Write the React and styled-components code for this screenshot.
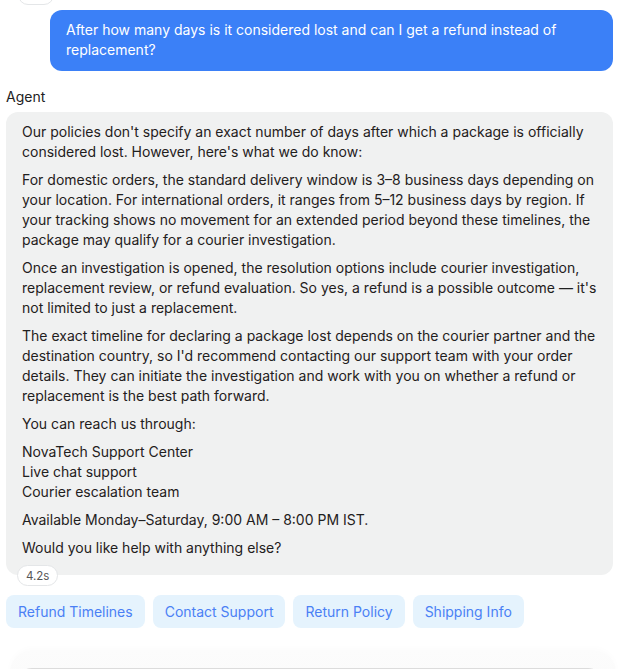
import React from 'react';
import styled, { createGlobalStyle } from 'styled-components';

const GlobalStyle = createGlobalStyle`
  html, body {
    margin: 0;
    padding: 0;
    background: #ffffff;
    overflow: hidden;
  }
  body {
    font-family: Inter, "Liberation Sans", Arial, sans-serif;
    color: #1f2020;
  }
`;

const Thread = styled.div`
  display: flex;
  flex-direction: column;
  padding: 0 15px 0 6px;
  height: 669px;
  box-sizing: border-box;
  overflow: hidden;
`;

const Stub = styled.div`
  align-self: flex-start;
  margin: -16px 0 0 12px;
  width: 36px;
  height: 21px;
  flex-shrink: 0;
  box-sizing: border-box;
  border: 1px solid #e4e6e8;
  border-radius: 10px;
  background: #fff;
`;

const UserRow = styled.div`
  display: flex;
  justify-content: flex-end;
  margin-top: 5px;
`;

const UserBubble = styled.div`
  max-width: 563px;
  box-sizing: border-box;
  background: #3b80f7;
  color: #ffffff;
  font-size: 14px;
  line-height: 20px;
  padding: 10px 16px 11px;
  border-radius: 12px;
`;

const Sender = styled.div`
  margin-top: 18px;
  font-size: 14px;
  line-height: 16px;
  color: #222;
`;

const AgentWrap = styled.div`
  position: relative;
  margin-top: 7px;
`;

const AgentBubble = styled.div`
  background: #f0f1f1;
  border-radius: 12px;
  padding: 10px 16px 17px;
  font-size: 14px;
  line-height: 20px;
  color: #1f2020;

  p {
    margin: 0 0 8px;
  }
  p:last-child {
    margin-bottom: 0;
  }
`;

const Timing = styled.span`
  position: absolute;
  left: 11px;
  bottom: -11px;
  height: 21px;
  padding: 0 8px;
  box-sizing: border-box;
  display: inline-flex;
  align-items: center;
  background: #ffffff;
  border: 1px solid #e4e6e8;
  border-radius: 11px;
  font-size: 11.5px;
  color: #555;
`;

const Chips = styled.div`
  display: flex;
  gap: 8px;
  margin-top: 20px;
`;

const Chip = styled.button`
  height: 33px;
  padding: 0 12px;
  border: none;
  border-radius: 8px;
  background: #e5f3fd;
  color: #4a80f5;
  font-family: inherit;
  font-size: 14px;
`;

const Composer = styled.div`
  flex-shrink: 0;
  margin: 22px -3px 0 4px;
  padding: 18px 10px 0 4px;
  border-radius: 22px 22px 0 0;
  background: linear-gradient(to bottom, #fcfcfc, #f9f9f9);
  box-shadow: 0 -2px 6px rgba(0, 0, 0, 0.015);
`;

const InputBox = styled.div`
  height: 50px;
  border: 1px solid #dcdcdc;
  border-radius: 18px;
  background: #ffffff;
`;

const suggestions = ['Refund Timelines', 'Contact Support', 'Return Policy', 'Shipping Info'];

export default function App() {
  return (
    <>
      <GlobalStyle />
      <Thread>
        <Stub />
        <UserRow>
          <UserBubble>
            After how many days is it considered lost and can I get a refund instead of replacement?
          </UserBubble>
        </UserRow>
        <Sender>Agent</Sender>
        <AgentWrap>
          <AgentBubble>
            <p>
              Our policies don't specify an exact number of days after which a package is officially
              considered lost. However, here's what we do know:
            </p>
            <p>
              For domestic orders, the standard delivery window is 3–8 business days depending on
              your location. For international orders, it ranges from 5–12 business days by region. If
              your tracking shows no movement for an extended period beyond these timelines, the
              package may qualify for a courier investigation.
            </p>
            <p>
              Once an investigation is opened, the resolution options include courier investigation,
              replacement review, or refund evaluation. So yes, a refund is a possible outcome — it's
              not limited to just a replacement.
            </p>
            <p>
              The exact timeline for declaring a package lost depends on the courier partner and the
              destination country, so I'd recommend contacting our support team with your order
              details. They can initiate the investigation and work with you on whether a refund or
              replacement is the best path forward.
            </p>
            <p>You can reach us through:</p>
            <p>
              NovaTech Support Center
              <br />
              Live chat support
              <br />
              Courier escalation team
            </p>
            <p>Available Monday–Saturday, 9:00 AM – 8:00 PM IST.</p>
            <p>Would you like help with anything else?</p>
          </AgentBubble>
          <Timing>4.2s</Timing>
        </AgentWrap>
        <Chips>
          {suggestions.map((s) => (
            <Chip key={s}>{s}</Chip>
          ))}
        </Chips>
        <Composer>
          <InputBox />
        </Composer>
      </Thread>
    </>
  );
}
